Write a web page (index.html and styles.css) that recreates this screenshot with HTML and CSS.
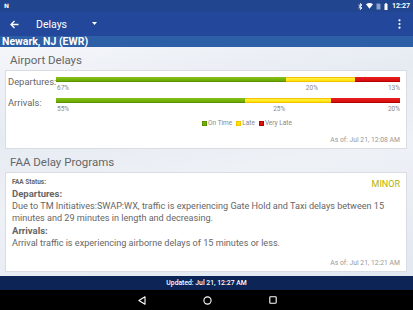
FILE: index.html
```html
<!DOCTYPE html>
<html>
<head>
<meta charset="utf-8">
<link rel="stylesheet" href="styles.css">
</head>
<body>
<div class="screen">
  <div class="statusbar">
    <span class="notif">N</span>
    <div class="sys">
      <svg class="ic" width="5" height="7" viewBox="0 0 5 7"><path d="M0.5 2 L4 5 L2.3 6.5 V0.5 L4 2 L0.5 5" fill="none" stroke="#fff" stroke-width="0.9"/></svg>
      <svg class="ic" width="7" height="6" viewBox="0 0 7 6"><path d="M0 1.2 Q3.5 -1 7 1.2 L3.5 5.8 Z" fill="#fff"/></svg>
      <svg class="ic" width="5" height="7" viewBox="0 0 5 7"><path d="M0.5 0.5 H3.5 L4.5 1.5 V6.5 H0.5 Z" fill="#8ea2c8"/></svg>
      <svg class="ic" width="4" height="7" viewBox="0 0 4 7"><rect x="1.3" y="0" width="1.4" height="1" fill="#fff"/><rect x="0.5" y="1" width="3" height="6" fill="#fff"/></svg>
      <span class="clock">12:27</span>
    </div>
  </div>
  <div class="toolbar">
    <svg class="back" width="9" height="9" viewBox="0 0 9 9"><path d="M8.5 4.5 H1.2 M4.5 1 L1 4.5 L4.5 8" fill="none" stroke="#fff" stroke-width="1.3"/></svg>
    <span class="title">Delays</span>
    <svg class="drop" width="5" height="3" viewBox="0 0 5 3"><path d="M0 0 H5 L2.5 3 Z" fill="#fff"/></svg>
    <span class="grow"></span>
    <svg class="kebab" width="3" height="10" viewBox="0 0 3 10"><circle cx="1.5" cy="1.3" r="1.1" fill="#fff"/><circle cx="1.5" cy="5" r="1.1" fill="#fff"/><circle cx="1.5" cy="8.7" r="1.1" fill="#fff"/></svg>
  </div>
  <div class="location">Newark, NJ (EWR)</div>
  <div class="content">
    <div class="sec-title">Airport Delays</div>
    <div class="card delays">
      <div class="row">
        <div class="lbl">Departures:</div>
        <div class="barcol">
          <div class="bar">
            <div class="seg ontime" style="width:67%"></div>
            <div class="seg late" style="width:20%"></div>
            <div class="seg vlate" style="width:13%"></div>
          </div>
          <div class="pcts">
            <span class="p first" style="width:67%">67%</span>
            <span class="p mid" style="width:20%">20%</span>
            <span class="p last" style="width:13%">13%</span>
          </div>
        </div>
      </div>
      <div class="row row2">
        <div class="lbl">Arrivals:</div>
        <div class="barcol">
          <div class="bar">
            <div class="seg ontime" style="width:55%"></div>
            <div class="seg late" style="width:25%"></div>
            <div class="seg vlate" style="width:20%"></div>
          </div>
          <div class="pcts">
            <span class="p first" style="width:55%">55%</span>
            <span class="p mid" style="width:25%">25%</span>
            <span class="p last" style="width:20%">20%</span>
          </div>
        </div>
      </div>
      <div class="legend">
        <span class="key"><i class="sw ontime"></i>On Time</span>
        <span class="key"><i class="sw late"></i>Late</span>
        <span class="key"><i class="sw vlate"></i>Very Late</span>
      </div>
      <div class="asof">As of: Jul 21, 12:08 AM</div>
    </div>
    <div class="sec-title">FAA Delay Programs</div>
    <div class="card faa">
      <div class="faa-head">
        <span class="status">FAA Status:</span>
        <span class="minor">MINOR</span>
      </div>
      <div class="h">Departures:</div>
      <div class="txt">Due to TM Initiatives:SWAP:WX, traffic is experiencing Gate Hold and Taxi delays between 15 minutes and 29 minutes in length and decreasing.</div>
      <div class="h h2">Arrivals:</div>
      <div class="txt">Arrival traffic is experiencing airborne delays of 15 minutes or less.</div>
      <div class="asof asof2">As of: Jul 21, 12:21 AM</div>
    </div>
  </div>
  <div class="footer">Updated: Jul 21, 12:27 AM</div>
  <div class="navbar">
    <svg width="8" height="9" viewBox="0 0 8 9"><path d="M7 0.8 V8.2 L0.9 4.5 Z" fill="none" stroke="#fff" stroke-width="1.1" stroke-linejoin="round"/></svg>
    <svg width="9" height="9" viewBox="0 0 9 9"><circle cx="4.5" cy="4.5" r="3.6" fill="none" stroke="#fff" stroke-width="1.1"/></svg>
    <svg width="8" height="8" viewBox="0 0 8 8"><rect x="0.8" y="0.8" width="6.4" height="6.4" rx="0.6" fill="none" stroke="#fff" stroke-width="1.1"/></svg>
  </div>
</div>
</body>
</html>
```

FILE: styles.css
```css
* { box-sizing: border-box; }
html, body { margin: 0; padding: 0; }
body {
  width: 413px;
  height: 310px;
  overflow: hidden;
  font-family: Roboto, "Liberation Sans", sans-serif;
}
.screen {
  width: 413px;
  height: 310px;
  display: flex;
  flex-direction: column;
}
.statusbar {
  height: 12px;
  background: #21458f;
  display: flex;
  align-items: center;
  justify-content: space-between;
  padding: 0 3px 0 4px;
  color: #fff;
}
.notif {
  font-size: 6px;
  font-weight: 700;
  line-height: 6px;
  font-family: "DejaVu Sans", sans-serif;
}
.sys {
  display: flex;
  align-items: center;
  gap: 3px;
}
.ic { display: block; }
.clock {
  font-size: 7px;
  font-weight: 700;
  line-height: 8px;
  margin-left: 1px;
}
.toolbar {
  height: 24px;
  background: #23479a;
  display: flex;
  align-items: center;
  padding: 0 12px 0 10px;
  color: #fff;
}
.back { display: block; margin-right: 17px; }
.title {
  font-size: 10.5px;
  font-weight: 400;
}
.drop { display: block; margin-left: 25px; margin-top: -1px; }
.grow { flex: 1; }
.kebab { display: block; }
.location {
  height: 11px;
  background: #2c5fa5;
  color: #fff;
  font-size: 10.5px;
  font-weight: 700;
  line-height: 11px;
  padding-left: 2px;
  white-space: nowrap;
}
.content {
  flex: 1;
  background: linear-gradient(170deg, #f4f6fa 0%, #e6ebf2 30%, #eef1f6 55%, #e2e8f1 100%);
  padding: 0 6px 0 5px;
}
.sec-title {
  padding: 6px 0 2px 5px;
  font-size: 11.5px;
  line-height: 15px;
  color: #666;
}
.card {
  background: #fff;
  border: 1px solid #d9dde3;
}
.delays {
  padding: 5px 6px 4px 2px;
}
.row {
  display: flex;
  align-items: flex-start;
}
.row2 { margin-top: 5px; }
.lbl {
  width: 48px;
  flex: none;
  font-size: 9.4px;
  line-height: 12px;
  color: #666;
  white-space: nowrap;
}
.barcol { flex: 1; padding-top: 1px; }
.bar {
  display: flex;
  height: 5px;
}
.seg { height: 5px; }
.ontime { background: linear-gradient(#86c21a, #6aa800); border-bottom: 1px solid #5a9300; }
.late { background: linear-gradient(#fff04a, #ffe000); border-top: 1px solid #f3c200; border-bottom: 1px solid #f3c200; }
.vlate { background: linear-gradient(#e82020, #d60c0c); border-bottom: 1px solid #b50000; }
.pcts {
  display: flex;
  margin-top: 2px;
  font-size: 6.5px;
  line-height: 8px;
  color: #888;
}
.p { white-space: nowrap; }
.first { text-align: left; padding-left: 1px; }
.mid { text-align: center; padding-right: 18px; }
.last { text-align: right; }
.legend {
  display: flex;
  justify-content: center;
  gap: 4px;
  margin-top: 6px;
  margin-left: 86px;
  font-size: 6.5px;
  line-height: 8px;
  color: #888;
}
.key { display: flex; align-items: center; }
.sw {
  display: inline-block;
  width: 5px;
  height: 5px;
  margin-right: 1px;
  border: 0;
}
.sw.ontime { background: #6fb000; border: 1px solid #5a9300; }
.sw.late { background: #ffe600; border: 1px solid #f3c200; }
.sw.vlate { background: #dd1010; border: 1px solid #b50000; }
.asof {
  margin-top: 9px;
  text-align: right;
  font-size: 6.8px;
  line-height: 8px;
  color: #999;
}
.faa {
  padding: 5px 6px 4px 6px;
}
.faa-head {
  display: flex;
  justify-content: space-between;
  align-items: flex-start;
  height: 11px;
}
.status {
  font-size: 6.5px;
  font-weight: 700;
  line-height: 8px;
  color: #666;
}
.minor {
  margin-top: 1px;
  font-size: 9px;
  line-height: 10px;
  color: #b3b300;
}
.h {
  margin-top: -1px;
  font-size: 9.5px;
  font-weight: 700;
  line-height: 12px;
  color: #666;
}
.h2 { margin-top: 1px; }
.txt {
  font-size: 9.1px;
  line-height: 12px;
  color: #666;
}
.asof2 { margin-top: 10px; }
.footer {
  height: 14px;
  background: #0c2456;
  color: #fff;
  font-size: 6.8px;
  font-weight: 500;
  line-height: 14px;
  text-align: center;
}
.navbar {
  height: 20px;
  background: #000;
  display: flex;
  align-items: center;
  justify-content: center;
  gap: 57px;
  padding-left: 2px;
}
.navbar svg { display: block; }
```
